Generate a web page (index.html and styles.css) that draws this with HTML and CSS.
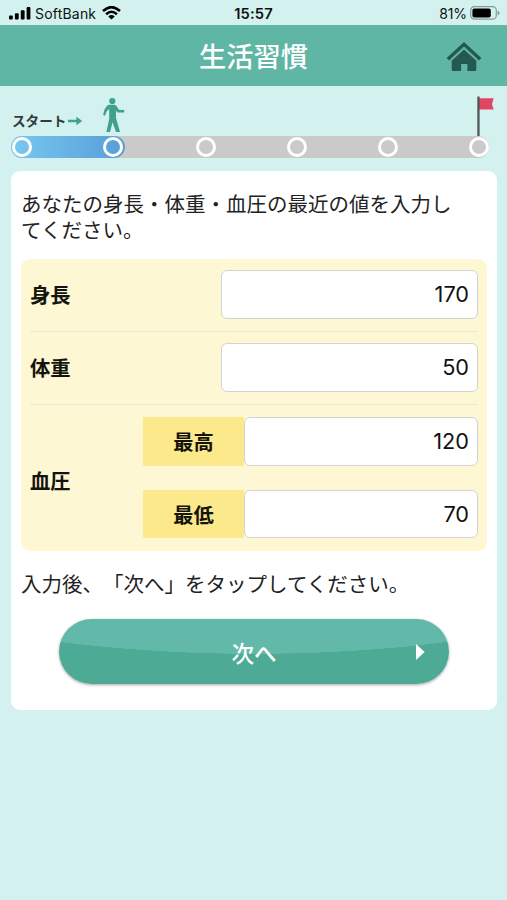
FILE: index.html
```html
<!DOCTYPE html>
<html lang="ja">
<head>
<meta charset="utf-8">
<title>生活習慣</title>
<link rel="stylesheet" href="styles.css">
</head>
<body>
<div class="status">
  <div class="carrier">
    <svg width="22" height="14" viewBox="0 0 22 14"><rect x="0" y="9.5" width="3.8" height="4" rx="1"/><rect x="5.9" y="7.2" width="3.8" height="6.3" rx="1"/><rect x="11.8" y="4.2" width="3.8" height="9.3" rx="1"/><rect x="17.6" y="1" width="3.8" height="12.5" rx="1"/></svg>
    <span class="carrier-name">SoftBank</span>
    <svg width="19" height="14" viewBox="0 0 19 14"><g fill="none" stroke="#000" stroke-width="2.5"><path d="M1 5Q9.5 -2.8 18 5"/><path d="M4.1 8.2Q9.5 3.3 14.9 8.2"/></g><path d="M6.3 10.4Q9.5 7.6 12.7 10.4L9.5 13.6Z"/></svg>
  </div>
  <span class="clock">15:57</span>
  <div class="battery">
    <span>81%</span>
    <svg width="30" height="14" viewBox="0 0 30 14"><rect x=".7" y=".7" width="25.6" height="12.4" rx="3.7" fill="none" stroke="#879b98" stroke-width="1.2"/><rect x="2.4" y="2.4" width="18.4" height="9" rx="2"/><path d="M27.6 4.8Q29.6 5.3 29.6 7T27.6 9.2Z" fill="#879b98"/></svg>
  </div>
</div>
<header class="header">
  <h1>生活習慣</h1>
  <svg class="home" width="36" height="31" viewBox="0 0 36 31"><path d="M18 1 35.4 17 33 19.5 18 5.6 3 19.5 .6 17Z"/><path d="M18 8.4 30.3 19.8V28.5Q30.3 30 28.8 30H21.4V23H15.1V30H7.2Q5.7 30 5.7 28.5V19.8Z"/></svg>
</header>
<section class="progress">
  <div class="markers">
    <span class="start">スタート</span>
    <svg class="arrow" width="15" height="10" viewBox="0 0 15 10"><path d="M0 3.7H8.4V.8L14.2 5 8.4 9.2V6.3H0Z"/></svg>
    <svg class="walker" width="22" height="36" viewBox="0 0 22 36"><circle cx="9.3" cy="4" r="3.1"/><path d="M6 7.7H11.4Q13 7.8 13.9 9.4L15.9 12.7 21.2 13V15.4L14.6 15.4 13 13.6V21L17 35H13L9.6 25.2 7 35H3.4L6.2 22V12L3.6 14.6 2 18.7.1 18 1.3 13Q3.6 8.2 6 7.7Z"/></svg>
    <svg class="flag" width="18" height="40" viewBox="0 0 18 40"><path d="M1.8 2.3H16.7L15 8.2 16.7 13.6H1.8Z" fill="#df4661"/><path d="M.3.5H2.6V40H.3Z" fill="#505758"/></svg>
  </div>
  <div class="track">
    <div class="done"><i></i><i></i></div>
    <i></i><i></i><i></i><i></i>
  </div>
</section>
<main class="card">
  <p>あなたの身長・体重・血圧の最近の値を入力してください。</p>
  <form class="fields">
    <div class="row"><label>身長</label><input type="text" value="170"></div>
    <div class="row"><label>体重</label><input type="text" value="50"></div>
    <div class="row pressure">
      <label>血圧</label>
      <div class="pair">
        <div class="sub"><span>最高</span><input type="text" value="120"></div>
        <div class="sub"><span>最低</span><input type="text" value="70"></div>
      </div>
    </div>
  </form>
  <p class="hint">入力後、「次へ」をタップしてください。</p>
  <button class="next" type="button"><span>次へ</span><svg width="9" height="16" viewBox="0 0 9 16"><path d="M0 0 8.7 8 0 16Z"/></svg></button>
</main>
</body>
</html>
```

FILE: styles.css
```css
* { box-sizing: border-box; }
body {
  margin: 0;
  min-height: 900px;
  background: #d3f1ee;
  color: #222;
  font-family: "Noto Sans CJK JP", sans-serif;
  text-spacing-trim: space-all;
}
svg { display: block; flex: none; }
.status {
  display: grid;
  grid-template-columns: 1fr auto 1fr;
  align-items: center;
  height: 25px;
  padding: 2px 9px 0 9px;
  font: 14px/20px Inter, sans-serif;
  color: #111;
}
.carrier, .battery { display: flex; align-items: center; }
.carrier-name { margin: 0 6px 0 4px; letter-spacing: .2px; }
.clock { font-weight: 600; font-size: 14.7px; letter-spacing: .15px; }
.battery { justify-content: flex-end; gap: 3px; letter-spacing: -.1px; }
.battery svg { margin: -1px -2px 0 0; }
.carrier svg { margin-top: -1px; }
.header {
  display: grid;
  grid-template-columns: 1fr auto 1fr;
  align-items: center;
  height: 61px;
  background: #60b6a5;
  color: #fff;
}
.header h1 { grid-column: 2; margin: 0 0 2px; font-size: 27.2px; line-height: 40px; font-weight: 500; }
.home { justify-self: end; margin: 1px 25px 0 0; fill: #23594e; }
.progress { height: 85px; padding: 10px 18.5px 0 11px; }
.markers { display: flex; height: 40px; align-items: flex-end; }
.start { margin: 0 2px 6px 1px; font-size: 13.6px; line-height: 20px; font-weight: 700; color: #333b3b; white-space: nowrap; }
.arrow { margin-bottom: 10px; fill: #42a18c; }
.walker { margin: 0 0 3px 20px; fill: #42a18c; }
.flag { margin: 0 -6px 0 auto; }
.track {
  display: flex;
  justify-content: space-between;
  align-items: center;
  height: 22px;
  border-radius: 11px;
  background: #cacaca;
}
.done {
  display: flex;
  justify-content: space-between;
  align-items: center;
  width: 113.5px;
  height: 22px;
  padding: 0 1.5px 0 1px;
  border-radius: 11px;
  background: linear-gradient(90deg, #78c8f0, #579dd8);
}
.track i { width: 20px; height: 20px; border: 3px solid #fff; border-radius: 50%; }
.card {
  margin: 0 10px 0 10.5px;
  height: 538.5px;
  padding: 19px 10px 0 10.5px;
  border-radius: 9px;
  background: #fff;
}
.card p { width: 440px; margin: 0; font-size: 20.5px; line-height: 26px; }
.fields {
  margin-top: 17px;
  padding: 0 9px;
  height: 291.5px;
  border-radius: 9px;
  background: #fdf7d3;
}
.row {
  display: flex;
  align-items: center;
  justify-content: space-between;
  height: 72.5px;
  border-bottom: 1px solid #ece7d4;
}
.row + .row { height: 73.5px; }
.row.pressure { height: 145.5px; padding-top: 6px; border: 0; }
label, .sub span { font-size: 20.3px; line-height: 30px; font-weight: 700; color: #14140f; }
label { padding-bottom: 2px; }
input {
  width: 257px;
  height: 49px;
  margin: 0;
  padding: 0 8px 1px;
  border: 1.5px solid #d3d3d6;
  border-radius: 6px;
  background: #fff;
  color: #111;
  font: 21.7px Inter, sans-serif;
  text-align: right;
}
.pair { display: grid; gap: 24.4px; margin-top: -6px; }
.sub { display: flex; width: 335px; height: 48.5px; }
.sub span { width: 101px; line-height: 48px; text-align: center; background: #fbe98b; }
.sub input { width: 234px; height: 48.5px; }
.card .hint { margin-top: 19px; }
.next {
  display: grid;
  grid-template-columns: 1fr auto 1fr;
  align-items: center;
  width: 390px;
  height: 65px;
  margin: 23px auto 0;
  padding: 1px 24.5px 0;
  border: 0;
  border-radius: 33px;
  background: radial-gradient(ellipse 480px 140px at 50% -105px, #63b9a9 99.7%, #4daa94 100%);
  box-shadow: 0 1px 3px rgba(0, 0, 0, .35);
  color: #fff;
  font: 500 22.5px/34px "Noto Sans CJK JP", sans-serif;
}
.next span { grid-column: 2; }
.next svg { justify-self: end; fill: #fff; }
```
